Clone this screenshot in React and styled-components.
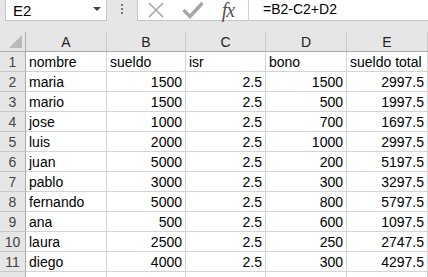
import styled, { createGlobalStyle } from "styled-components";

const GlobalStyle = createGlobalStyle`
  html, body {
    margin: 0;
    padding: 0;
    background: #e6e6e6;
  }
  body {
    font-family: "Liberation Sans", Arial, sans-serif;
  }
`;

const Window = styled.div`
  width: 428px;
  height: 277px;
  overflow: hidden;
  background: #e6e6e6;
`;

const FormulaRow = styled.div`
  display: flex;
  align-items: flex-start;
  height: 21px;
  padding-left: 5px;
`;

const NameBox = styled.div`
  box-sizing: border-box;
  width: 102px;
  height: 21px;
  background: #fff;
  border: 1px solid #c6c6c6;
  border-top: 0;
  display: flex;
  align-items: center;
  justify-content: space-between;
  padding: 0 5px 0 7px;
  font-size: 15px;
  color: #000;
`;

const Caret = styled.span`
  width: 0;
  height: 0;
  border-left: 4px solid transparent;
  border-right: 4px solid transparent;
  border-top: 4px solid #444;
  margin-top: -3px;
`;

const Grip = styled.div`
  width: 30px;
  height: 21px;
  display: flex;
  flex-direction: column;
  align-items: center;
  justify-content: center;
  gap: 2px;
  padding-bottom: 3px;
  box-sizing: border-box;
`;

const Dot = styled.span`
  width: 2px;
  height: 2px;
  background: #767676;
`;

const FormulaPanel = styled.div`
  flex: 1;
  height: 21px;
  box-sizing: border-box;
  background: #fff;
  border-left: 1px solid #c6c6c6;
  border-bottom: 1px solid #c6c6c6;
  display: flex;
  align-items: center;
`;

const IconSlot = styled.div`
  width: ${(p) => p.$w}px;
  height: 20px;
  display: flex;
  align-items: center;
  justify-content: center;
`;

const Fx = styled.span`
  font-family: "Liberation Serif", "Times New Roman", serif;
  font-style: italic;
  font-size: 20px;
  color: #555;
  letter-spacing: -1px;
  line-height: 20px;
  padding: 0 3px 0 1px;
`;

const PanelDivider = styled.span`
  width: 1px;
  height: 21px;
  background: #d4d4d4;
  margin-left: 2px;
`;

const FormulaText = styled.span`
  padding-left: 14px;
  font-size: 14px;
  color: #000;
  margin-top: -2px;
`;

const Sheet = styled.div`
  margin-top: 11px;
  display: grid;
  grid-template-columns: 26px 81px 79px 80px 81px 81px 1fr;
  grid-template-rows: 20px repeat(12, 20px);
  background: #fff;
`;

const Corner = styled.div`
  box-sizing: border-box;
  background: #e6e6e6;
  border-right: 1px solid #ababab;
  border-bottom: 1px solid #ababab;
  position: relative;
  &::after {
    content: "";
    position: absolute;
    right: 3px;
    bottom: 3px;
    width: 0;
    height: 0;
    border-left: 13px solid transparent;
    border-bottom: 13px solid #b9b9b9;
  }
`;

const ColHead = styled.div`
  box-sizing: border-box;
  background: #e6e6e6;
  border-right: 1px solid #c8c8c8;
  border-bottom: 1px solid #ababab;
  display: flex;
  align-items: center;
  justify-content: center;
  font-size: 14px;
  color: #222;
`;

const RowHead = styled.div`
  box-sizing: border-box;
  background: #e6e6e6;
  border-right: 1px solid #ababab;
  border-bottom: 1px solid #c8c8c8;
  display: flex;
  align-items: center;
  justify-content: center;
  font-size: 14px;
  color: #444;
  padding-top: 1px;
`;

const Cell = styled.div`
  box-sizing: border-box;
  border-right: 1px solid #d4d4d4;
  border-bottom: 1px solid #d4d4d4;
  font-size: 14px;
  color: #000;
  line-height: 20px;
  padding: 0 3px;
  white-space: nowrap;
  overflow: visible;
  text-align: ${(p) => (p.$num ? "right" : "left")};
`;

const columns = ["A", "B", "C", "D", "E", ""];

const rows = [
  ["nombre", "sueldo", "isr", "bono", "sueldo total"],
  ["maria", 1500, 2.5, 1500, 2997.5],
  ["mario", 1500, 2.5, 500, 1997.5],
  ["jose", 1000, 2.5, 700, 1697.5],
  ["luis", 2000, 2.5, 1000, 2997.5],
  ["juan", 5000, 2.5, 200, 5197.5],
  ["pablo", 3000, 2.5, 300, 3297.5],
  ["fernando", 5000, 2.5, 800, 5797.5],
  ["ana", 500, 2.5, 600, 1097.5],
  ["laura", 2500, 2.5, 250, 2747.5],
  ["diego", 4000, 2.5, 300, 4297.5],
];

function CancelIcon() {
  return (
    <svg width="18" height="18" viewBox="0 0 18 18">
      <path d="M2 2 L16 16 M16 2 L2 16" stroke="#a6a6a6" strokeWidth="1.6" fill="none" />
    </svg>
  );
}

function EnterIcon() {
  return (
    <svg width="22" height="18" viewBox="0 0 22 18">
      <path d="M1.5 9 L8 15.5 L20.5 2" stroke="#a6a6a6" strokeWidth="3.4" fill="none" strokeLinejoin="miter" />
    </svg>
  );
}

export default function App() {
  return (
    <>
      <GlobalStyle />
      <Window>
        <FormulaRow>
          <NameBox>
            <span>E2</span>
            <Caret />
          </NameBox>
          <Grip>
            <Dot />
            <Dot />
            <Dot />
          </Grip>
          <FormulaPanel>
            <IconSlot $w={36}>
              <CancelIcon />
            </IconSlot>
            <IconSlot $w={38}>
              <EnterIcon />
            </IconSlot>
            <IconSlot $w={34}>
              <Fx>fx</Fx>
            </IconSlot>
            <PanelDivider />
            <FormulaText>=B2-C2+D2</FormulaText>
          </FormulaPanel>
        </FormulaRow>

        <Sheet>
          <Corner />
          {columns.map((c, i) => (
            <ColHead key={i}>{c}</ColHead>
          ))}
          {rows.map((r, i) => (
            <>
              <RowHead key={"h" + i}>{i + 1}</RowHead>
              {r.map((v, j) => (
                <Cell key={i + "-" + j} $num={typeof v === "number"}>
                  {v}
                </Cell>
              ))}
              <Cell key={i + "-f"} />
            </>
          ))}
          {/* row 12 only peeks in at the bottom edge */}
          <RowHead />
          {columns.map((c, i) => (
            <Cell key={"last" + i} />
          ))}
        </Sheet>
      </Window>
    </>
  );
}
